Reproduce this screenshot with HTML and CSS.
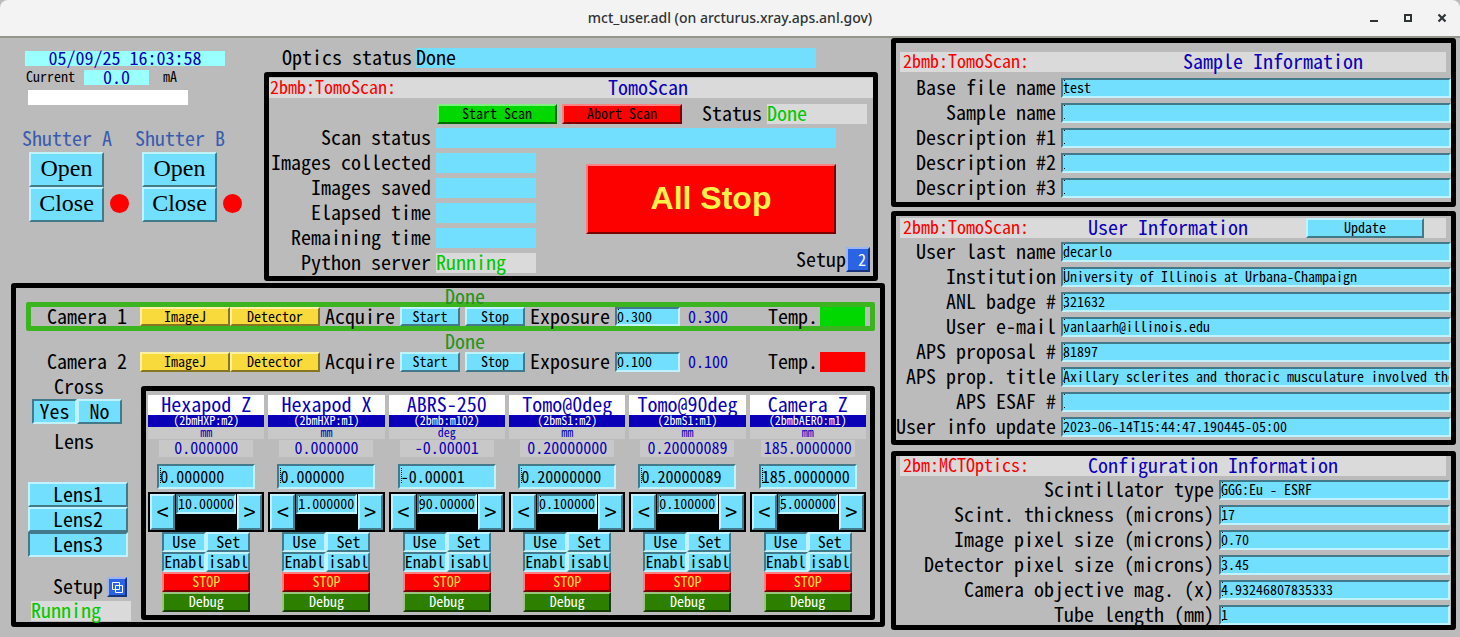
FILE: index.html
```html
<!DOCTYPE html>
<html lang="en">
<head>
<meta charset="utf-8">
<title>mct_user.adl (on arcturus.xray.aps.anl.gov)</title>
<link rel="stylesheet" href="styles.css">
</head>
<body>
<header class="titlebar">
  <h1 class="title">mct_user.adl (on arcturus.xray.aps.anl.gov)</h1>
  <div class="window-controls">
    <button class="win" aria-label="Minimize"><svg width="12" height="12" viewBox="0 0 12 12"><path d="M2 8h8v2H2z"/></svg></button>
    <button class="win" aria-label="Maximize"><svg width="12" height="12" viewBox="0 0 12 12"><path fill-rule="evenodd" d="M2 2h8v8H2zM4 4v4h4V4z"/></svg></button>
    <button class="win" aria-label="Close"><svg width="12" height="12" viewBox="0 0 12 12"><path d="M2.500 2.500l7 7M9.500 2.500l-7 7" stroke="#2e3436" stroke-width="2.200"/></svg></button>
  </div>
</header>
<main class="screen">
  <div class="col-left">
    <div class="top">
      <section class="beam">
        <output class="clock">05/09/25 16:03:58</output>
        <div class="current"><span class="current-name">Current</span><output class="current-value">0.0</output><span>mA</span></div>
        <div class="bar"></div>
        <div class="shutters">
          <div class="shutter">
            <h2 class="shutter-name">Shutter A</h2>
            <div class="shutter-body"><div class="stack"><button class="btn serif">Open</button><button class="btn serif">Close</button></div><span class="lamp"></span></div>
          </div>
          <div class="shutter">
            <h2 class="shutter-name">Shutter B</h2>
            <div class="shutter-body"><div class="stack"><button class="btn serif">Open</button><button class="btn serif">Close</button></div><span class="lamp"></span></div>
          </div>
        </div>
      </section>
      <div class="scan-col">
        <div class="optics"><span>Optics status</span><output class="optics-value">Done</output></div>
        <section class="panel tomo">
          <header class="head"><span class="pv">2bmb:TomoScan:</span><h2 class="tomo-title">TomoScan</h2></header>
          <div class="scan-actions">
            <button class="btn green">Start Scan</button><button class="btn red">Abort Scan</button>
            <span class="status-name">Status</span><output class="state">Done</output>
          </div>
          <div class="scan-body">
            <div class="scan-rows">
              <div class="scan-row"><span>Scan status</span><output class="field wide"></output></div>
              <div class="scan-row"><span>Images collected</span><output class="field"></output></div>
              <div class="scan-row"><span>Images saved</span><output class="field"></output></div>
              <div class="scan-row"><span>Elapsed time</span><output class="field"></output></div>
              <div class="scan-row"><span>Remaining time</span><output class="field"></output></div>
              <div class="scan-row"><span>Python server</span><output class="state">Running</output></div>
            </div>
            <div class="scan-side">
              <button class="btn all-stop">All Stop</button>
              <div class="setup"><span>Setup</span><button class="btn blue" aria-label="Setup menu 2">&nbsp;2</button></div>
            </div>
          </div>
        </section>
      </div>
    </div>

    <section class="panel cameras">
      <output class="cam-state">Done</output>
      <div class="cam selected">
        <span class="cam-name">Camera 1</span>
        <button class="btn yellow">ImageJ</button><button class="btn yellow">Detector</button>
        <span class="acquire">Acquire</span>
        <button class="btn">Start</button><button class="btn stop">Stop</button>
        <label class="exposure" for="exp1">Exposure</label><input class="entry" id="exp1" value="0.300">
        <output class="exp-value">0.300</output>
        <span class="temp">Temp.</span><span class="temp-ok"></span>
      </div>
      <output class="cam-state">Done</output>
      <div class="cam">
        <span class="cam-name">Camera 2</span>
        <button class="btn yellow">ImageJ</button><button class="btn yellow">Detector</button>
        <span class="acquire">Acquire</span>
        <button class="btn">Start</button><button class="btn stop">Stop</button>
        <label class="exposure" for="exp2">Exposure</label><input class="entry" id="exp2" value="0.100">
        <output class="exp-value">0.100</output>
        <span class="temp">Temp.</span><span class="temp-bad"></span>
      </div>
      <div class="lower">
        <div class="side">
          <h3 class="side-name">Cross</h3>
          <div class="pair"><button class="btn on" aria-pressed="true">Yes</button><button class="btn" aria-pressed="false">No</button></div>
          <h3 class="side-name">Lens</h3>
          <div class="lenses"><button class="btn" aria-pressed="false">Lens1</button><button class="btn" aria-pressed="false">Lens2</button><button class="btn on" aria-pressed="true">Lens3</button></div>
          <div class="side-setup"><span>Setup</span><button class="btn blue" aria-label="Camera setup"><svg width="11" height="11" viewBox="0 0 11 11" fill="none" stroke="#fff"><path d="M7.500 3.500v-3h-7v7h3M3.500 3.500h7v7h-7zM3.500 7.500h4v-4"/></svg></button></div>
          <output class="state side-state">Running</output>
        </div>
        <div class="panel motors">
          <article class="motor">
            <h3 class="m-name">Hexapod Z</h3><p class="m-pv">(2bmHXP:m2)</p><p class="m-unit">mm</p>
            <output class="m-read">0.000000</output><input class="entry m-set" aria-label="Hexapod Z setpoint" value="0.000000">
            <div class="tweak"><button class="btn" aria-label="Tweak down">&lt;</button><input class="entry" aria-label="Hexapod Z step" value="10.00000"><button class="btn" aria-label="Tweak up">&gt;</button></div>
            <div class="modes"><button class="btn on">Use</button><button class="btn">Set</button><button class="btn on" aria-label="Enable">Enabl</button><button class="btn" aria-label="Disable">isabl</button></div>
            <button class="btn m-stop">STOP</button><button class="btn m-debug">Debug</button>
          </article>
          <article class="motor">
            <h3 class="m-name">Hexapod X</h3><p class="m-pv">(2bmHXP:m1)</p><p class="m-unit">mm</p>
            <output class="m-read">0.000000</output><input class="entry m-set" aria-label="Hexapod X setpoint" value="0.000000">
            <div class="tweak"><button class="btn" aria-label="Tweak down">&lt;</button><input class="entry" aria-label="Hexapod X step" value="1.000000"><button class="btn" aria-label="Tweak up">&gt;</button></div>
            <div class="modes"><button class="btn on">Use</button><button class="btn">Set</button><button class="btn on" aria-label="Enable">Enabl</button><button class="btn" aria-label="Disable">isabl</button></div>
            <button class="btn m-stop">STOP</button><button class="btn m-debug">Debug</button>
          </article>
          <article class="motor">
            <h3 class="m-name">ABRS-250</h3><p class="m-pv">(2bmb:m102)</p><p class="m-unit">deg</p>
            <output class="m-read">-0.00001</output><input class="entry m-set" aria-label="ABRS-250 setpoint" value="-0.00001">
            <div class="tweak"><button class="btn" aria-label="Tweak down">&lt;</button><input class="entry" aria-label="ABRS-250 step" value="90.00000"><button class="btn" aria-label="Tweak up">&gt;</button></div>
            <div class="modes"><button class="btn on">Use</button><button class="btn">Set</button><button class="btn on" aria-label="Enable">Enabl</button><button class="btn" aria-label="Disable">isabl</button></div>
            <button class="btn m-stop">STOP</button><button class="btn m-debug">Debug</button>
          </article>
          <article class="motor">
            <h3 class="m-name">Tomo@0deg</h3><p class="m-pv">(2bmS1:m2)</p><p class="m-unit">mm</p>
            <output class="m-read">0.20000000</output><input class="entry m-set" aria-label="Tomo@0deg setpoint" value="0.20000000">
            <div class="tweak"><button class="btn" aria-label="Tweak down">&lt;</button><input class="entry" aria-label="Tomo@0deg step" value="0.100000"><button class="btn" aria-label="Tweak up">&gt;</button></div>
            <div class="modes"><button class="btn on">Use</button><button class="btn">Set</button><button class="btn on" aria-label="Enable">Enabl</button><button class="btn" aria-label="Disable">isabl</button></div>
            <button class="btn m-stop">STOP</button><button class="btn m-debug">Debug</button>
          </article>
          <article class="motor">
            <h3 class="m-name">Tomo@90deg</h3><p class="m-pv">(2bmS1:m1)</p><p class="m-unit">mm</p>
            <output class="m-read">0.20000089</output><input class="entry m-set" aria-label="Tomo@90deg setpoint" value="0.20000089">
            <div class="tweak"><button class="btn" aria-label="Tweak down">&lt;</button><input class="entry" aria-label="Tomo@90deg step" value="0.100000"><button class="btn" aria-label="Tweak up">&gt;</button></div>
            <div class="modes"><button class="btn on">Use</button><button class="btn">Set</button><button class="btn on" aria-label="Enable">Enabl</button><button class="btn" aria-label="Disable">isabl</button></div>
            <button class="btn m-stop">STOP</button><button class="btn m-debug">Debug</button>
          </article>
          <article class="motor">
            <h3 class="m-name">Camera Z</h3><p class="m-pv">(2bmbAERO:m1)</p><p class="m-unit">mm</p>
            <output class="m-read">185.0000000</output><input class="entry m-set" aria-label="Camera Z setpoint" value="185.0000000">
            <div class="tweak"><button class="btn" aria-label="Tweak down">&lt;</button><input class="entry" aria-label="Camera Z step" value="5.000000"><button class="btn" aria-label="Tweak up">&gt;</button></div>
            <div class="modes"><button class="btn on">Use</button><button class="btn">Set</button><button class="btn on" aria-label="Enable">Enabl</button><button class="btn" aria-label="Disable">isabl</button></div>
            <button class="btn m-stop">STOP</button><button class="btn m-debug">Debug</button>
          </article>
        </div>
      </div>
    </section>
  </div>

  <div class="col-right">
    <section class="panel sample">
      <header class="head info-head"><span class="pv">2bmb:TomoScan:</span><h2 class="sample-title">Sample Information</h2></header>
      <div class="form">
        <label for="s1">Base file name</label><input class="entry" id="s1" value="test">
        <label for="s2">Sample name</label><input class="entry" id="s2">
        <label for="s3">Description #1</label><input class="entry" id="s3">
        <label for="s4">Description #2</label><input class="entry" id="s4">
        <label for="s5">Description #3</label><input class="entry" id="s5">
      </div>
    </section>
    <section class="panel user">
      <header class="head info-head"><span class="pv">2bmb:TomoScan:</span><h2 class="info-title">User Information</h2><button class="btn update">Update</button></header>
      <div class="form">
        <label for="u1">User last name</label><input class="entry" id="u1" value="decarlo">
        <label for="u2">Institution</label><input class="entry" id="u2" value="University of Illinois at Urbana-Champaign">
        <label for="u3">ANL badge #</label><input class="entry" id="u3" value="321632">
        <label for="u4">User e-mail</label><input class="entry" id="u4" value="vanlaarh@illinois.edu">
        <label for="u5">APS proposal #</label><input class="entry" id="u5" value="81897">
        <label for="u6">APS prop. title</label><input class="entry" id="u6" value="Axillary sclerites and thoracic musculature involved the">
        <label for="u7">APS ESAF #</label><input class="entry" id="u7">
        <label for="u8">User info update</label><input class="entry" id="u8" value="2023-06-14T15:44:47.190445-05:00">
      </div>
    </section>
    <section class="panel config">
      <header class="head info-head"><span class="pv">2bm:MCTOptics:</span><h2 class="info-title">Configuration Information</h2></header>
      <div class="form form-config">
        <label for="c1">Scintillator type</label><input class="entry" id="c1" value="GGG:Eu - ESRF">
        <label for="c2">Scint. thickness (microns)</label><input class="entry" id="c2" value="17">
        <label for="c3">Image pixel size (microns)</label><input class="entry" id="c3" value="0.70">
        <label for="c4">Detector pixel size (microns)</label><input class="entry" id="c4" value="3.45">
        <label for="c5">Camera objective mag. (x)</label><input class="entry" id="c5" value="4.93246807835333">
        <label for="c6">Tube length (mm)</label><input class="entry" id="c6" value="1">
      </div>
    </section>
  </div>
</main>
</body>
</html>
```
FILE: styles.css
```css
:root {
  --mono: "Noto Sans Mono CJK JP", "DejaVu Sans Mono", monospace;
  --cyan: #73dfff;
  --light: #c0f3ff;
  --dark: #42798b;
  --navy: #0a00b8;
  --large: 20px;
  --value: 16px;
  --small: 14px;
}

* { box-sizing: border-box; }

body {
  margin: 0;
  background: #bbb;
  color: #000;
  font: 400 var(--large)/18px var(--mono);
  white-space: nowrap;
}

h1, h2, h3, p { margin: 0; font-size: inherit; font-weight: inherit; }
output { display: block; }

.titlebar {
  display: grid;
  grid-template-columns: 1fr auto 1fr;
  align-items: center;
  height: 38px;
  background: #f3f3f3;
  border-bottom: 2px solid #96968e;
  border-radius: 8px 8px 0 0;
}
.title { grid-column: 2; font: 500 14px/20px "Noto Sans", sans-serif; color: #2e3436; }
.window-controls { display: flex; justify-content: flex-end; gap: 22px; padding-right: 12px; }
.win { display: flex; padding: 0; border: 0; background: none; }
.win svg { fill: #2e3436; }

.screen {
  display: grid;
  grid-template-columns: minmax(0, 874fr) minmax(0, 565fr);
  gap: 6px;
  padding: 0 4px 7px 11px;
}

.panel { border: 5px solid #000; border-radius: 3px; }

.head { display: flex; position: relative; height: 20px; background: #dadada; color: var(--navy); }
.pv { padding-left: 1px; color: #fd0000; font-size: 18px; line-height: 16px; }

.btn {
  min-width: 0;
  padding: 0 0 2px;
  border: 2px solid;
  border-color: var(--light) var(--dark) var(--dark) var(--light);
  background: var(--cyan);
  color: #000;
  font: 400 var(--small)/14px var(--mono);
  text-align: center;
}
.btn.on { border-color: var(--dark) var(--light) var(--light) var(--dark); }
.btn.green { background: #00d800; border-color: #80ef80 #006a00 #006a00 #80ef80; }
.btn.red, .btn.all-stop, .btn.m-stop { background: #fd0000; border-color: #ff8080 #7a0000 #7a0000 #ff8080; }
.btn.yellow { background: #f9da3c; border-color: #fdf0a0 #877621 #877621 #fdf0a0; }
.btn.blue { background: #2a63e4; border-color: #9ab4f4 #17357c #17357c #9ab4f4; color: #fff; }

.entry {
  min-width: 0;
  width: 100%;
  height: 20px;
  padding: 0 0 2px;
  border: 2px solid;
  border-color: var(--dark) var(--light) var(--light) var(--dark);
  border-radius: 0;
  background:
    linear-gradient(#000, #000) 1px 0 / 1px 1px no-repeat,
    linear-gradient(#000, #000) 1px 13px / 1px 1px no-repeat,
    var(--cyan);
  color: #000;
  font: 400 var(--small)/14px var(--mono);
}

/* Beam status and shutters */
.top { display: grid; grid-template-columns: 253px minmax(0, 1fr); }
.beam { padding: 13px 0 0 11px; }
.clock {
  width: 200px; height: 15px; margin-left: 3px;
  background: #9ff; color: var(--navy);
  font-size: 18px; line-height: 12px; text-align: center;
}
.current {
  display: flex; gap: 14px; height: 15px; margin: 4px 0 0 4px;
  font-size: var(--small); line-height: 13px;
}
.current-name { width: 44px; }
.current-value { width: 65px; background: #9ff; color: var(--navy); font-size: 18px; line-height: 12px; text-align: center; }
.bar { width: 160px; height: 15px; margin: 5px 0 0 6px; background: #fff; }
.shutters { display: flex; gap: 1px; padding-top: 24px; }
.shutter { width: 112px; }
.shutter-name { height: 20px; color: #3a5cae; }
.shutter-body { display: flex; gap: 6px; padding: 3px 0 0 7px; }
.stack { display: grid; grid-template-rows: 35px 35px; width: 75px; flex: none; }
.btn.serif { padding-bottom: 4px; font: 24px/26px "Liberation Serif", serif; }
.lamp { flex: none; width: 19px; height: 19px; margin-top: 42px; border-radius: 50%; background: #fd0000; }

/* Scan panel */
.scan-col { padding-right: 7px; }
.optics { display: grid; grid-template-columns: 134px minmax(0, 400px); grid-template-rows: 20px; padding: 10px 0 4px 18px; }
.optics-value { background: var(--cyan); }
.tomo { padding: 1px 0 3px; }
.tomo-title { position: absolute; inset: 0; padding-left: 154px; text-align: center; }
.scan-actions {
  display: grid; grid-template-columns: 120px 120px auto 100px; justify-content: start;
  gap: 5px; height: 20px; margin-top: 6px; padding-left: 168px;
}
.status-name { padding-left: 15px; }
.state { width: 100px; height: 20px; background: #dadada; color: #00c800; }
.scan-body { display: grid; grid-template-columns: 268px minmax(0, 1fr); margin-top: 4px; }
.scan-rows { display: grid; grid-auto-rows: 20px; row-gap: 5px; }
.scan-row { display: grid; grid-template-columns: 162px 100px; column-gap: 5px; text-align: right; }
.scan-row .state { text-align: left; }
.field { height: 20px; background: var(--cyan); }
.field.wide { width: 400px; }
.scan-side { display: flex; flex-direction: column; padding: 36px 3px 0 49px; }
.btn.all-stop { width: 250px; height: 70px; padding-bottom: 3px; color: #fbf34a; font: bold 32px/60px "Liberation Sans", sans-serif; }
.setup { display: flex; align-self: flex-end; margin-top: 13px; height: 25px; line-height: 23px; }
.setup .btn { width: 24px; font-size: var(--value); line-height: 18px; }

/* Camera rows */
.cameras { margin-top: 2px; padding: 0 5px 1px 10px; }
.cam-state { height: 14px; padding-left: 419px; color: #27921a; line-height: 16px; }
.cam {
  display: grid;
  grid-template-columns: 93px 90px 90px 80px 60px 5px 60px 90px 65px 88px 52px 45px;
  grid-template-rows: 20px;
  margin-bottom: 5px;
  padding-left: 21px;
}
.cam > .stop { grid-column: 7; }
.cam.selected {
  grid-template-rows: 19px;
  margin-bottom: 2px;
  padding-left: 16px;
  border: 5px solid #3cb420;
  border-radius: 2px;
}
.cam.selected .entry { height: 19px; }
.cam.selected + .cam-state { height: 19px; }
.acquire, .exposure { padding-left: 5px; }
.exp-value { padding-left: 8px; color: var(--navy); font-size: var(--value); }
.temp-ok { background: #00d800; }
.temp-bad { background: #fd0000; }

/* Optics column */
.lower { display: grid; grid-template-columns: 115px minmax(0, 1fr); }
.side { width: 105px; }
.side-name { height: 20px; padding-left: 28px; }
.pair { display: grid; grid-template-columns: 45px 45px; height: 25px; margin: 2px 0 8px 6px; }
.pair .btn, .lenses .btn { font-size: var(--large); line-height: 18px; }
.lenses { display: grid; grid-template-rows: repeat(3, 25px); margin: 30px 3px 0 2px; }
.side-setup { display: flex; gap: 4px; margin: 20px 0 4px 27px; }
.side-setup .btn { display: grid; place-items: center; width: 20px; height: 20px; padding: 0; }
.side-state { margin-left: 5px; }

/* Motors */
.motors {
  display: grid;
  grid-template-columns: repeat(6, minmax(0, 1fr));
  gap: 4px;
  align-self: start;
  margin: 9px 0 0;
  padding: 4px 4px 3px 2px;
}
.motor { display: flex; flex-direction: column; align-items: center; }
.m-name { align-self: stretch; height: 20px; background: #fff; color: var(--navy); text-align: center; }
.m-pv { align-self: stretch; height: 12px; background: var(--navy); color: #fff; font-size: 12px; line-height: 10px; text-align: center; }
.m-unit { align-self: stretch; height: 12px; background: #c8c8c8; color: var(--navy); font-size: 12px; line-height: 10px; text-align: center; }
.m-read { width: 94px; height: 17px; margin-top: 1px; background: #c8c8c8; color: var(--navy); font-size: var(--value); line-height: 14px; text-align: center; }
.entry.m-set {
  width: 98px; height: 25px; margin: 7px 0 3px; padding-left: 1px;
  background: repeating-linear-gradient(#000 0 1px, transparent 1px 2px) 1px 2px / 1px 16px no-repeat, var(--cyan);
  font-size: var(--value); line-height: 19px;
}
.tweak { display: grid; grid-template-columns: 25px minmax(0, 1fr) 25px; align-self: stretch; gap: 1px; height: 40px; padding: 2px; background: #000; }
.tweak .btn { font-size: 24px; line-height: 30px; }
.modes { display: grid; grid-template-columns: 44px 44px; grid-template-rows: 20px 20px; }
.modes .btn { font-size: var(--value); }
.btn.m-stop, .btn.m-debug { width: 88px; height: 20px; }
.btn.m-stop { color: #fbe03c; }
.btn.m-debug { background: #2d7f00; border-color: #9cc47e #153c00 #153c00 #9cc47e; color: #fff; }

/* Information panels */
.col-right { display: flex; flex-direction: column; }
.info-head { margin: 0 5px 0 4px; }
.info-head .pv { padding-left: 3px; }
.sample-title { position: absolute; inset: 0; padding-left: 200px; text-align: center; }
.info-title { padding-left: 59px; }
.btn.update { width: 118px; margin: 0 22px 0 auto; }
.form { display: grid; grid-template-columns: 165px minmax(0, 1fr); grid-auto-rows: 20px; row-gap: 5px; }
.form label { padding-right: 5px; text-align: right; }
.form-config { grid-template-columns: 323px minmax(0, 1fr); padding-right: 1px; }
.sample { padding: 9px 0 4px; }
.sample .form { margin-top: 6px; }
.user { margin-top: 4px; padding: 2px 0 3px; }
.user .form { margin-top: 4px; }
.config { margin-top: 6px; }
.config .form { margin-top: 4px; }
```
